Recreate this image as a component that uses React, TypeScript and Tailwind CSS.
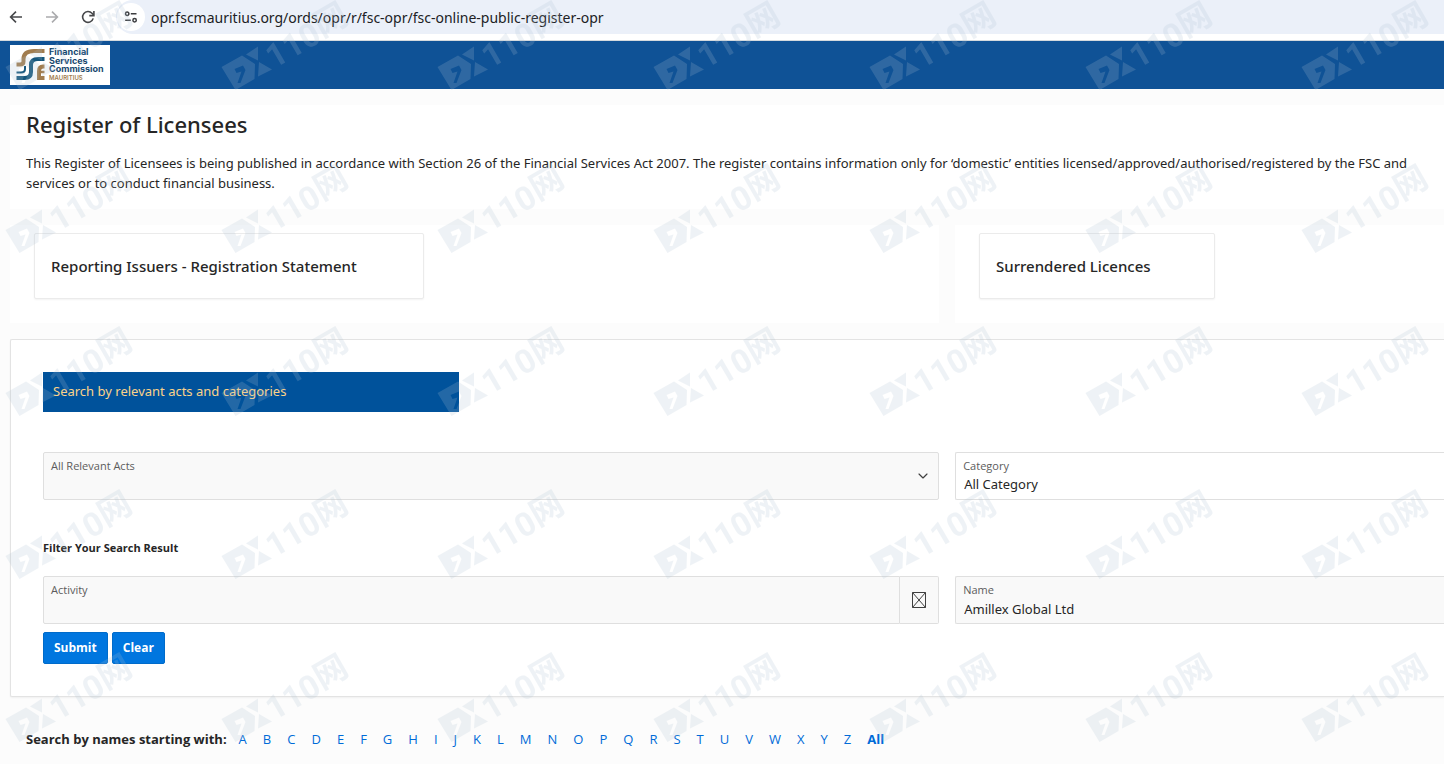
import { useState } from 'react';
import { ChevronDown } from 'lucide-react';

const letters = 'ABCDEFGHIJKLMNOPQRSTUVWXYZ'.split('');

const labelStyle = "absolute left-2 top-1.5 text-[11px] leading-4 text-[#5c5c5c] font-['Open_Sans',sans-serif] pointer-events-none";
const fieldStyle = "block w-full h-12 px-2 pt-[18px] text-[13px] text-[#262626] border border-[#dfdfdf] outline-none appearance-none";

function BrowserBar() {
	return (
		<div className="flex h-10 items-start bg-white">
			<div className="flex h-[34px] items-center pl-2 text-[#46474a]">
				<button aria-label="Back" className="w-4 h-4">
					<svg viewBox="0 0 16 16" fill="none" stroke="currentColor" strokeWidth="1.6">
						<path d="M14 8H3M8 2.6L2.6 8L8 13.4" />
					</svg>
				</button>
				<button aria-label="Forward" className="w-4 h-4 ml-5 text-[#aaabad]">
					<svg viewBox="0 0 16 16" fill="none" stroke="currentColor" strokeWidth="1.6">
						<path d="M2 8h11M8 2.6L13.4 8L8 13.4" />
					</svg>
				</button>
				<button aria-label="Reload" className="w-4 h-4 ml-5">
					<svg viewBox="0 0 16 16" fill="none" stroke="currentColor" strokeWidth="1.6">
						<path d="M13.2 9.4A5.4 5.4 0 1 1 12 4.3L13.6 6" />
						<path d="M13.9 2v4.6H9.3" />
					</svg>
				</button>
			</div>
			<div className="flex flex-1 h-[34px] ml-5 items-center rounded-l-full bg-[#ebf0f9] min-w-0">
				<button aria-label="View site information" className="flex shrink-0 w-7 h-7 ml-px items-center justify-center rounded-full bg-white text-[#3c3d40]">
					<svg viewBox="0 0 14 14" className="w-3.5 h-3.5" fill="none" stroke="currentColor" strokeWidth="1.5">
						<circle cx="3.2" cy="3.7" r="1.7" />
						<path d="M6.8 3.7h5.7M1.2 10.3h5.6" />
						<circle cx="10.6" cy="10.3" r="1.7" />
					</svg>
				</button>
				<input
					aria-label="Address"
					className="flex-1 min-w-0 ml-1.5 bg-transparent text-[14px] text-[#202124] outline-none"
					defaultValue="opr.fscmauritius.org/ords/opr/r/fsc-opr/fsc-online-public-register-opr"
				/>
			</div>
		</div>
	)
}

function Logo() {
	return (
		<svg viewBox="0 0 100 40" className="w-[100px] h-10 bg-white" role="img" aria-label="Financial Services Commission Mauritius">
			<g fill="none" strokeWidth="4">
				<path stroke="#a17c4e" d="M34.5 6H24Q13.500 6 13.500 14V16.500Q13.500 19.500 10 19.500H6.5" />
				<path stroke="#15567c" d="M34.5 14H28Q21 14 21 20V27Q21 33 14.500 33H6.5" />
				<path stroke="#15567c" strokeWidth="2" d="M6.5 27.500H11Q15 27.500 15 24V21" />
				<path stroke="#a17c4e" d="M34.5 21.5H33Q29 21.5 29 26V35M29 33H34.5" />
				<path stroke="#a17c4e" strokeWidth="2.5" d="M29 27H34.5" />
			</g>
			<g fill="#17486f" className="font-['Inter',sans-serif] text-[9px] font-bold">
				<text x="39" y="10">Financial</text>
				<text x="39" y="18.5">Services</text>
				<text x="39" y="27">Commission</text>
			</g>
			<text x="39" y="35" fill="#a17c4e" className="font-['Inter',sans-serif] text-[6px] font-semibold">MAURITIUS</text>
		</svg>
	)
}

function Watermark() {
	return (
		<svg className="pointer-events-none absolute inset-0 w-full h-full opacity-20" aria-hidden="true">
			<defs>
				<pattern id="mark" width="216" height="163" patternUnits="userSpaceOnUse">
					<g fill="#afc3d4">
						<path
							fillRule="evenodd"
							d="M5.5 67L26 55.500L39 64L38.500 79L19.500 90ZM18.500 69L27 65.500L29.500 70L24.500 83L21.500 83L25.500 71.500L20.500 73Z"
						/>
						<path d="M30 54.500L42 46.500V60.500ZM43 62L56 69.500L42 76.500Z" />
						<text transform="translate(58 69) rotate(-30)" className="font-['Roboto',sans-serif] text-[33px] font-bold">110</text>
						<text transform="translate(106 38) rotate(-30)" className="font-['Noto_Sans_CJK_SC',sans-serif] text-[33px] font-bold">网</text>
					</g>
				</pattern>
			</defs>
			<rect width="100%" height="100%" fill="url(#mark)" />
		</svg>
	)
}

export default function App() {
	const [name, setName] = useState('Amillex Global Ltd')
	const [activity, setActivity] = useState('')

	const handleClear = (): void => {
		setName('')
		setActivity('')
	}

	return (
		<div className="relative min-h-screen overflow-hidden bg-[#fcfcfc] text-[#262626] font-['Noto_Sans',sans-serif]">
			<BrowserBar />
			<header className="flex h-[49px] items-center border-t border-[#d5dade] bg-[#0f5296] px-2.5">
				<Logo />
			</header>
			<main className="pt-4 pl-2.5 pb-4">
				<section className="bg-white px-4 pt-1 pb-4">
					<h1 className="text-[22px] leading-[30px] font-medium">Register of Licensees</h1>
					<p className="mt-3.5 text-[13px] leading-5 whitespace-nowrap">
						This Register of Licensees is being published in accordance with Section 26 of the Financial Services Act 2007. The register contains information only for ‘domestic’ entities licensed/approved/authorised/registered by the FSC and
						<br />
						services or to conduct financial business.
					</p>
				</section>

				<div className="mt-4 grid grid-cols-[19fr_10fr] gap-4 text-[15px] font-medium">
					<div className="bg-white px-6 pt-2 pb-6">
						<a href="#issuers" className="flex w-[390px] h-[66px] items-center rounded-xs border border-[#ebebeb] bg-white px-4 shadow-xs">
							Reporting Issuers - Registration Statement
						</a>
					</div>
					<div className="bg-white px-6 pt-2 pb-6">
						<a href="#surrendered" className="flex w-[236px] h-[66px] items-center rounded-xs border border-[#ebebeb] bg-white px-4 shadow-xs">
							Surrendered Licences
						</a>
					</div>
				</div>

				<form className="mt-4 rounded-l-xs border border-r-0 border-[#e3e3e3] bg-white py-8 pl-8 shadow-xs" onSubmit={(e) => e.preventDefault()}>
					<h2 className="flex w-[416px] h-10 items-center bg-[#00529b] px-2.5 text-[13px] text-[#fbd38a]">
						Search by relevant acts and categories
					</h2>
					<div className="mt-10 grid grid-cols-[11fr_6fr] gap-4">
						<div className="relative">
							<label htmlFor="acts" className={labelStyle}>All Relevant Acts</label>
							<select id="acts" className={`${fieldStyle} rounded-xs bg-[#f9f9f9]`}>
								<option></option>
							</select>
							<ChevronDown className="pointer-events-none absolute right-2 top-4 w-4 h-4 text-[#404040]" strokeWidth={1.75} />
						</div>
						<div className="relative">
							<label htmlFor="category" className={labelStyle}>Category</label>
							<select id="category" className={`${fieldStyle} rounded-l-xs border-r-0 bg-white`}>
								<option>All Category</option>
							</select>
						</div>
					</div>

					<h3 className="mt-10 text-[11px] leading-4 font-bold font-['Open_Sans',sans-serif]">Filter Your Search Result</h3>

					<div className="mt-5 grid grid-cols-[11fr_6fr] gap-4">
						<div className="relative flex">
							<label htmlFor="activity" className={labelStyle}>Activity</label>
							<input
								id="activity"
								className={`${fieldStyle} rounded-l-xs bg-[#f9f9f9]`}
								value={activity}
								onChange={(e) => setActivity(e.target.value)}
							/>
							<button type="button" aria-label="Pick activity" className="flex shrink-0 w-[39px] h-12 items-center justify-center rounded-r-xs border border-l-0 border-[#dfdfdf] bg-[#f9f9f9] text-[#404040]">
								<svg viewBox="0 0 14 16" className="w-3.5 h-4" fill="none" stroke="currentColor">
									<path d="M.5 .5h13v15H.5ZM.5 .5l13 15M13.500 .5L.5 15.500" />
								</svg>
							</button>
						</div>
						<div className="relative">
							<label htmlFor="name" className={labelStyle}>Name</label>
							<input
								id="name"
								className={`${fieldStyle} rounded-l-xs border-r-0 bg-[#f9f9f9]`}
								value={name}
								onChange={(e) => setName(e.target.value)}
							/>
						</div>
					</div>

					<div className="mt-2 flex gap-1 text-[12px] font-bold text-white font-['Open_Sans',sans-serif]">
						<button type="submit" className="h-8 rounded-xs border border-[#006bca] bg-[#0076df] px-2.5">Submit</button>
						<button type="button" className="h-8 rounded-xs border border-[#006bca] bg-[#0076df] px-2.5" onClick={handleClear}>Clear</button>
					</div>
				</form>

				<nav className="mt-8 flex flex-wrap items-center px-4 text-[13px] leading-5 font-['Open_Sans',sans-serif]">
					<span className="mr-3 font-bold">Search by names starting with:</span>
					<div className="flex gap-4 text-[#006bd8]">
						{letters.map((letter) => (
							<a href={`#${letter}`} key={letter}>{letter}</a>
						))}
						<a href="#all" className="font-bold">All</a>
					</div>
				</nav>
			</main>
			<Watermark />
		</div>
	);
}
